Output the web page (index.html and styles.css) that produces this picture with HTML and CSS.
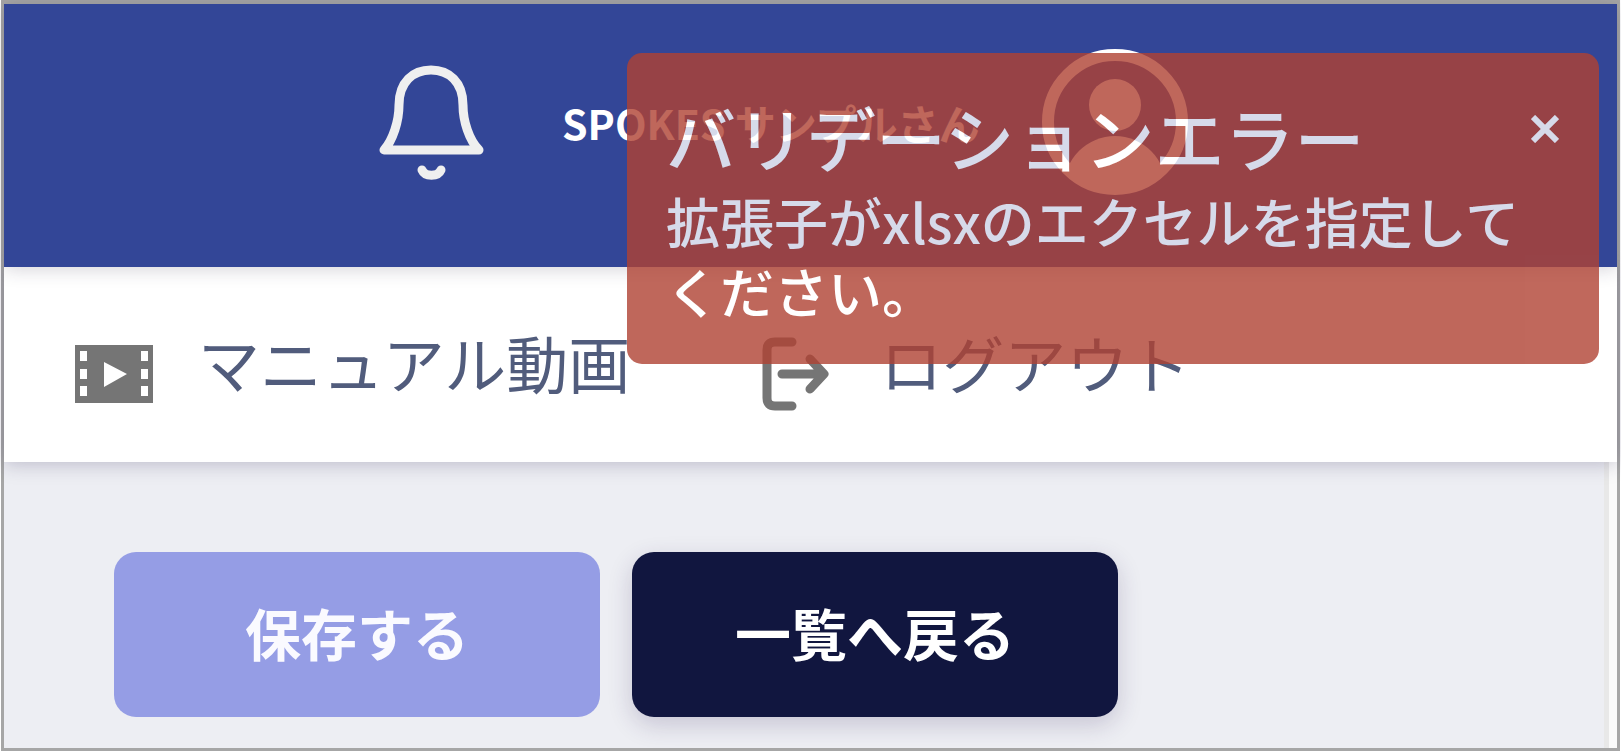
FILE: index.html
```html
<!DOCTYPE html>
<html lang="ja">
<head>
<meta charset="utf-8">
<meta name="viewport" content="width=device-width, initial-scale=1">
<title>SPOKES</title>
<link rel="stylesheet" href="styles.css">
</head>
<body>
<div class="frame">
  <header class="header">
    <button class="icon-button bell" type="button" aria-label="通知">
      <svg width="106" height="118" viewBox="0 0 106 118" fill="none" stroke="#efefef" stroke-width="9" stroke-linecap="round" stroke-linejoin="round" aria-hidden="true">
        <path d="M6 87H101C91 77 85 58 85 42C85 19 71 7 53 7S21 19 21 42C21 58 15 77 6 87Z"/>
        <path d="M44 107C47 114 60 114 63 107"/>
      </svg>
    </button>
    <span class="user-name">SPOKES サンプルさん</span>
    <button class="icon-button avatar" type="button" aria-label="アカウント">
      <svg width="146" height="146" viewBox="0 0 146 146" aria-hidden="true">
        <defs><clipPath id="avatar-clip"><circle cx="73" cy="73" r="70"/></clipPath></defs>
        <circle cx="73" cy="73" r="67" fill="none" stroke="#fff" stroke-width="12"/>
        <circle cx="73" cy="56" r="26" fill="#fff"/>
        <circle cx="73" cy="138" r="51" fill="#fff" clip-path="url(#avatar-clip)"/>
      </svg>
    </button>
  </header>

  <nav class="nav">
    <a class="nav-link" href="#manual">
      <svg class="nav-icon" width="78" height="58" viewBox="0 0 78 58" aria-hidden="true">
        <path fill="#757575" fill-rule="evenodd" d="M0 0H78V58H0ZM5 6V16H12V6ZM5 24V34H12V24ZM5 41V51H12V41ZM66 6V16H73V6ZM66 24V34H73V24ZM66 41V51H73V41ZM29 17V42L52 29Z"/>
      </svg>
      <span>マニュアル動画</span>
    </a>
    <a class="nav-link" href="#logout">
      <svg class="nav-icon" width="74" height="74" viewBox="-1 0 74 74" fill="none" stroke="#757575" stroke-width="9" stroke-linecap="round" stroke-linejoin="round" aria-hidden="true">
        <path d="M30 5H13Q5 5 5 13V61Q5 69 13 69H30"/>
        <path d="M20 37H61M48 22L62 37L48 52"/>
      </svg>
      <span>ログアウト</span>
    </a>
  </nav>

  <main class="main">
    <div class="actions">
      <button class="button button-save" type="button">保存する</button>
      <button class="button button-back" type="button">一覧へ戻る</button>
    </div>
  </main>

  <div class="toast" role="alert">
    <div class="toast-body">
      <div class="toast-title">バリデーションエラー</div>
      <div class="toast-message">拡張子がxlsxのエクセルを指定してください。</div>
    </div>
    <button class="icon-button toast-close" type="button" aria-label="閉じる">
      <svg width="28" height="28" viewBox="0 0 28 28" stroke="#fff" stroke-width="6" aria-hidden="true">
        <path d="M2 2L26 26M26 2L2 26"/>
      </svg>
    </button>
  </div>
</div>
</body>
</html>
```
FILE: styles.css
```css
* {
  box-sizing: border-box;
}

body {
  margin: 0;
  background: #fff;
  font-family: "Noto Sans CJK JP", sans-serif;
}

.frame {
  position: relative;
  display: flex;
  flex-direction: column;
  min-height: calc(100vh - 1px);
  margin: 0 1px 1px;
  border: 3px solid #a6a6a6;
  border-top-width: 4px;
  background: #fafafa;
}

.icon-button {
  display: flex;
  padding: 0;
  border: 0;
  background: none;
  cursor: pointer;
}

.header {
  position: relative;
  z-index: 2;
  display: flex;
  align-items: center;
  padding: 45px 24px 72px 374px;
  background: #334697;
  box-shadow: 0 2px 18px rgba(40, 30, 60, 0.2);
}

.user-name {
  margin-left: 78px;
  color: #fff;
  font-size: 41px;
  font-weight: 700;
  line-height: 60px;
  white-space: nowrap;
}

.avatar {
  margin-left: 62px;
}

.nav {
  position: relative;
  z-index: 1;
  display: flex;
  align-items: center;
  gap: 131px;
  padding: 46px 71px 51px;
  background: #fff;
  box-shadow: 0 2px 18px rgba(40, 30, 80, 0.25);
}

.nav-link {
  display: flex;
  align-items: center;
  gap: 45px;
  color: #515c7c;
  font-size: 62px;
  line-height: 98px;
  text-decoration: none;
  white-space: nowrap;
}

.nav-icon {
  flex: none;
  margin-top: 24px;
}

.main {
  flex: 1;
  margin-right: 8px;
  padding: 90px 110px 31px;
  border-right: 5px solid #e8e8e8;
  background: #edeef3;
}

.actions {
  display: flex;
  gap: 32px;
}

.button {
  width: 486px;
  height: 165px;
  padding: 0 0 6px;
  border: 0;
  border-radius: 22px;
  font-family: inherit;
  font-size: 56px;
  font-weight: 700;
  cursor: pointer;
}

.button-save {
  background: #959de5;
  color: #fafaff;
}

.button-back {
  background: #11163f;
  color: #fff;
  box-shadow: 0 8px 24px rgba(50, 35, 90, 0.2);
}

.toast {
  position: absolute;
  z-index: 3;
  top: 49px;
  right: 18px;
  display: flex;
  align-items: flex-start;
  justify-content: space-between;
  width: 972px;
  padding: 38px 40px 38px 39px;
  border-radius: 15px;
  background: #b04233;
  color: #fff;
  opacity: 0.8;
}

.toast-body {
  width: 864px;
}

.toast-title {
  margin-bottom: 4px;
  font-size: 70px;
  font-weight: 500;
  line-height: 91px;
}

.toast-message {
  font-size: 54px;
  font-weight: 500;
  line-height: 70px;
}

.toast-close {
  margin-top: 24px;
}
```
